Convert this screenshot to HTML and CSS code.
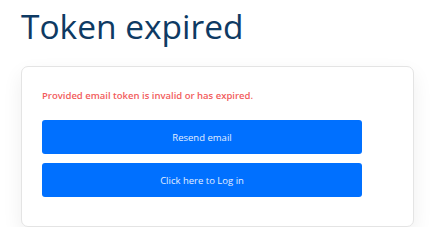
FILE: index.html
```html
<!DOCTYPE html>
<html>
<head>
  <meta charset="utf-8">
  <meta name="viewport" content="width=device-width, initial-scale=1">
  <title>Token expired</title>
  <link rel="stylesheet" href="styles.css">
</head>
<body>
  <div class="page">
    <h1 class="title">Token expired</h1>

    <div class="card">
      <p class="error-msg">Provided email token is invalid or has expired.</p>
      <div class="actions">
        <button class="primary-btn">Resend email</button>
        <button class="primary-btn">Click here to Log in</button>
      </div>
    </div>
  </div>
</body>
</html>
```

FILE: styles.css
```css
body {
  font-family: 'Open Sans', 'Noto Sans', sans-serif;
  margin: 0;
  background: #ffffff;
  color: #202124;
}

.page {
  padding: 0 21px;
}

.title {
  margin: 0;
  padding-top: 3px;
  font-size: 33.5px;
  font-weight: 400;
  line-height: 46px;
  color: #0e3a63;
}

.card {
  margin-top: 17px;
  background: white;
  border: 1px solid #e4e4e4;
  border-radius: 7px;
  box-shadow: 0 8px 20px rgba(0, 0, 0, 0.07);
  padding: 22px 20px 29px 20px;
}

.error-msg {
  margin: 0 0 17px 0;
  font-size: 9.5px;
  font-weight: 600;
  line-height: 14px;
  color: #f25c5c;
}

.actions {
  display: flex;
  flex-direction: column;
  gap: 9px;
  width: 320px;
}

.primary-btn {
  height: 34px;
  background: #0070ff;
  color: #e3eeff;
  border: none;
  border-radius: 3px;
  font-family: inherit;
  font-size: 9.5px;
  cursor: pointer;
}
```
